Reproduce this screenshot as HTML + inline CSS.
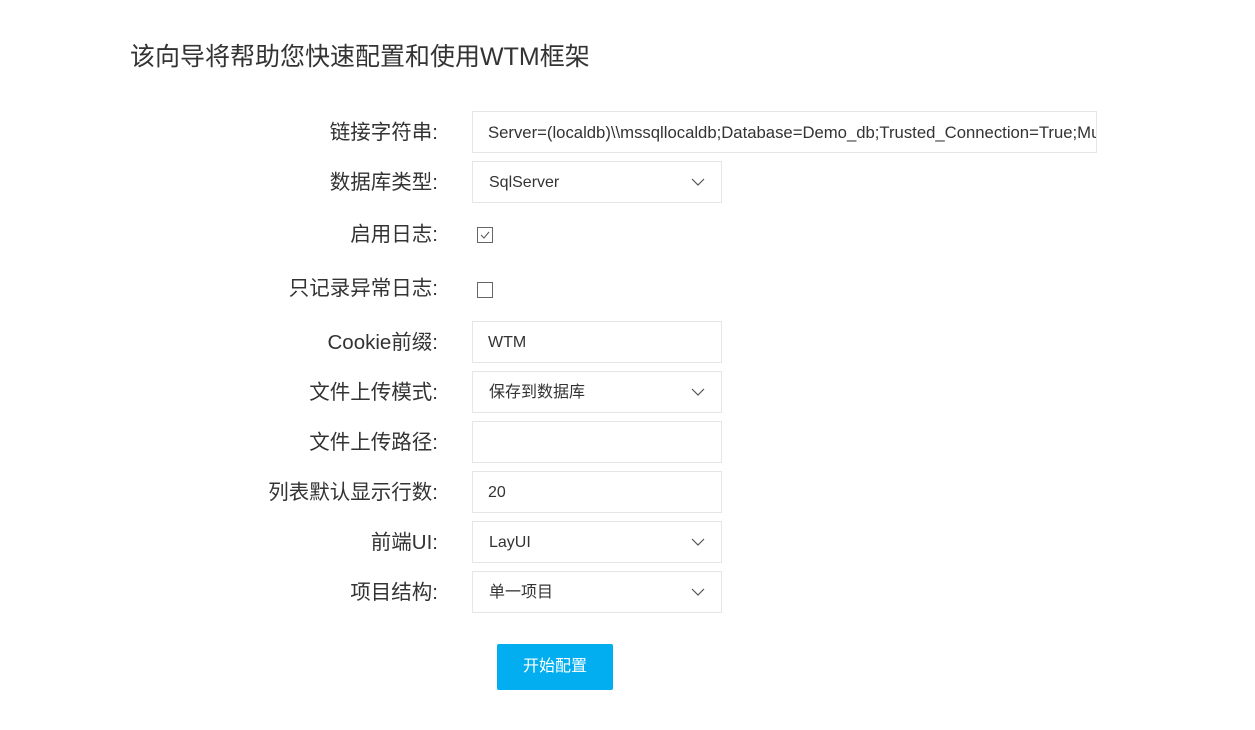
<!DOCTYPE html>
<html><head><meta charset="utf-8"><style>
body{margin:0;background:#fff;width:1255px;height:730px;overflow:hidden;font-family:"Liberation Sans","Noto Sans CJK SC",sans-serif;color:#333;position:relative}
.t{position:absolute;left:130px;top:37px;font-size:25px;color:#333;white-space:nowrap}
.l{position:absolute;right:817px;font-size:20.5px;color:#333;white-space:nowrap;line-height:44px}
.i{position:absolute;left:472px;border:1px solid #e6e6e6;font-size:16px;line-height:42px;padding-left:16px;box-sizing:border-box;width:250px;height:42px;color:#333;white-space:nowrap;overflow:hidden}
.i.w{width:625px;padding-left:15px;font-size:16.7px}
.i svg{position:absolute;right:16px;top:16px}
.c{position:absolute;left:477px;border:1px solid #666;box-sizing:border-box;width:16px;height:16px}
.b{position:absolute;left:497px;top:644px;width:116px;height:46px;background:#02aeef;border-radius:2px;color:#fff;font-size:16px;line-height:46px;text-align:center}
</style></head><body>
<div class="t">该向导将帮助您快速配置和使用WTM框架</div>
<div class="l" style="top:111px">链接字符串:</div>
<div class="i w" style="top:111px">Server=(localdb)\\mssqllocaldb;Database=Demo_db;Trusted_Connection=True;MultipleActiveResultSets=true</div>
<div class="l" style="top:161px">数据库类型:</div>
<div class="i" style="top:161px">SqlServer<svg width="14" height="9" viewBox="0 0 14 9"><path d="M1 1l6 6 6-6" fill="none" stroke="#555" stroke-width="1.2"/></svg></div>
<div class="l" style="top:213px">启用日志:</div>
<div class="c" style="top:227px"><svg width="14" height="14" viewBox="0 0 14 14" style="position:absolute;left:0;top:0"><path d="M3 7l3 3 5-6" fill="none" stroke="#555" stroke-width="1"/></svg></div>
<div class="l" style="top:267px">只记录异常日志:</div>
<div class="c" style="top:282px"></div>
<div class="l" style="top:321px">Cookie前缀:</div>
<div class="i" style="top:321px;padding-left:15px">WTM</div>
<div class="l" style="top:371px">文件上传模式:</div>
<div class="i" style="top:371px">保存到数据库<svg width="14" height="9" viewBox="0 0 14 9"><path d="M1 1l6 6 6-6" fill="none" stroke="#555" stroke-width="1.2"/></svg></div>
<div class="l" style="top:421px">文件上传路径:</div>
<div class="i" style="top:421px"></div>
<div class="l" style="top:471px">列表默认显示行数:</div>
<div class="i" style="top:471px;padding-left:15px">20</div>
<div class="l" style="top:521px">前端UI:</div>
<div class="i" style="top:521px">LayUI<svg width="14" height="9" viewBox="0 0 14 9"><path d="M1 1l6 6 6-6" fill="none" stroke="#555" stroke-width="1.2"/></svg></div>
<div class="l" style="top:571px">项目结构:</div>
<div class="i" style="top:571px">单一项目<svg width="14" height="9" viewBox="0 0 14 9"><path d="M1 1l6 6 6-6" fill="none" stroke="#555" stroke-width="1.2"/></svg></div>
<div class="b">开始配置</div>
</body></html>
